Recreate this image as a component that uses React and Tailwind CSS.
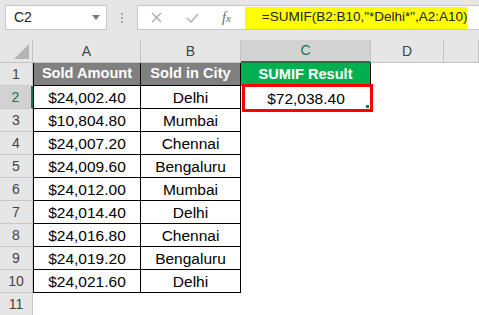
const ROWS = [
  ["$24,002.40", "Delhi"],
  ["$10,804.80", "Mumbai"],
  ["$24,007.20", "Chennai"],
  ["$24,009.60", "Bengaluru"],
  ["$24,012.00", "Mumbai"],
  ["$24,014.40", "Delhi"],
  ["$24,016.80", "Chennai"],
  ["$24,019.20", "Bengaluru"],
  ["$24,021.60", "Delhi"],
];

function FormulaBar() {
  return (
    <div className="flex h-[40px] items-start bg-[#e6e6e6] pl-[5px] pt-[5px]">
      <div className="flex h-[25px] w-[102px] items-center justify-between border border-[#c6c6c6] bg-white pl-[8px] pr-[6px] text-[14px] text-[#222]">
        <span>C2</span>
        <svg width="8" height="5" viewBox="0 0 8 5">
          <path d="M0 0h8L4 5z" fill="#7a7a7a" />
        </svg>
      </div>
      <div className="flex h-[25px] w-[30px] flex-col items-center justify-center gap-[2px]">
        <span className="h-[2px] w-[2px] bg-[#a8a8a8]" />
        <span className="h-[2px] w-[2px] bg-[#a8a8a8]" />
        <span className="h-[2px] w-[2px] bg-[#a8a8a8]" />
      </div>
      <div className="flex h-[25px] flex-1 items-center border border-r-0 border-[#c6c6c6] bg-white">
        <svg className="ml-[13px]" width="11" height="11" viewBox="0 0 11 11">
          <path d="M1 1l9 9M10 1l-9 9" stroke="#a9a9a9" strokeWidth="1.3" />
        </svg>
        <svg className="ml-[24px]" width="13" height="10" viewBox="0 0 13 10">
          <path d="M1 5l4 4 7-8" stroke="#b5b5b5" strokeWidth="1.6" fill="none" />
        </svg>
        <span className="ml-[23px] font-['Liberation_Serif',serif] text-[14px] italic text-[#6a6a6a]">
          f<span className="text-[11px]">x</span>
        </span>
        <div className="ml-[14px] flex h-[22px] w-[222px] items-center bg-[#ffff00] pl-[17px] text-[13.5px] text-[#222]">
          =SUMIF(B2:B10,"*Delhi*",A2:A10)
        </div>
      </div>
    </div>
  );
}

function Sheet() {
  const head = "flex items-center justify-center border-b border-r border-[#c3c3c3] bg-[#e6e6e6] text-[14px] text-[#444]";
  const rowHead = "flex items-center justify-center border-b border-r border-[#c8c8c8] bg-[#e6e6e6] text-[14px] text-[#444]";
  return (
    <div className="grid grid-cols-[33px_108px_100px_130px_73px_1fr] grid-rows-[23px_repeat(11,23px)]">
      <div className="flex items-end justify-end border-b border-r border-[#c3c3c3] bg-[#e6e6e6] pb-[3px] pr-[3px]">
        <svg width="15" height="15" viewBox="0 0 15 15">
          <path d="M15 0v15H0z" fill="#b4b4b4" />
        </svg>
      </div>
      <div className={head}>A</div>
      <div className={head}>B</div>
      <div className="flex items-center justify-center border-b-2 border-r border-b-[#217346] border-r-[#c3c3c3] bg-[#d2d2d2] text-[14px] text-[#217346]">
        C
      </div>
      <div className={head}>D</div>
      <div className={head}></div>

      <div className={rowHead}>1</div>
      <div className="flex items-center justify-center border-b border-l border-r border-black bg-[#808080] text-[14.6px] font-bold text-white">
        Sold Amount
      </div>
      <div className="flex items-center justify-center border-b border-r border-black bg-[#808080] text-[14.6px] font-bold text-white">
        Sold in City
      </div>
      <div className="flex items-center justify-center border-r border-black bg-[#00b050] text-[14.6px] font-bold text-white">
        SUMIF Result
      </div>
      <div />
      <div />

      {ROWS.map(([amount, city], i) => {
        const n = i + 2;
        const selected = n === 2;
        return [
          <div
            key={`h${n}`}
            className={
              selected
                ? "flex items-center justify-center border-b border-r-2 border-b-[#c8c8c8] border-r-[#217346] bg-[#d2d2d2] text-[14px] text-[#217346]"
                : rowHead
            }
          >
            {n}
          </div>,
          <div
            key={`a${n}`}
            className="flex items-center justify-center border-b border-l border-r border-black pt-[2px] text-[15.5px] text-black"
          >
            {amount}
          </div>,
          <div
            key={`b${n}`}
            className="flex items-center justify-center border-b border-r border-black pt-[2px] text-[15.5px] text-black"
          >
            {city}
          </div>,
          <div
            key={`c${n}`}
            className="relative flex items-center justify-center pt-[2px] text-[15.5px] text-black"
          >
            {selected && (
              <>
                {"$72,038.40"}
                <span className="absolute bottom-[-3px] left-[1px] right-[-2px] top-[-2px] border-[3px] border-[#ff0000]" />
                <span className="absolute bottom-[1px] right-[2px] h-[3px] w-[3px] bg-[#217346]" />
              </>
            )}
          </div>,
          <div key={`d${n}`} />,
          <div key={`e${n}`} />,
        ];
      })}

      <div className={rowHead}>11</div>
      <div />
      <div />
      <div />
      <div />
      <div />
    </div>
  );
}

export default function App() {
  return (
    <div className="h-[315px] w-[479px] overflow-hidden bg-white font-['Liberation_Sans',Arial,sans-serif]">
      <FormulaBar />
      <Sheet />
    </div>
  );
}
